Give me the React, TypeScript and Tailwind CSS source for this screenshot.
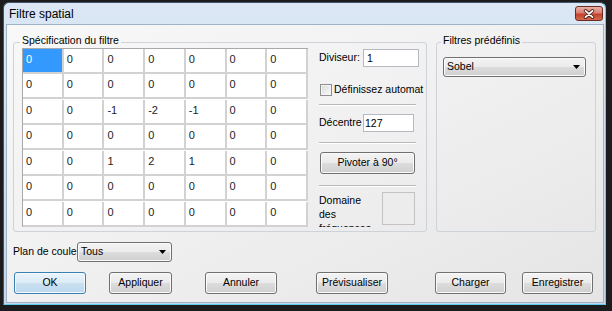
import React from 'react';

// Sobel kernel shown in the "Spécification du filtre" grid
const MATRIX: number[][] = [
  [0, 0, 0, 0, 0, 0, 0],
  [0, 0, 0, 0, 0, 0, 0],
  [0, 0, -1, -2, -1, 0, 0],
  [0, 0, 0, 0, 0, 0, 0],
  [0, 0, 1, 2, 1, 0, 0],
  [0, 0, 0, 0, 0, 0, 0],
  [0, 0, 0, 0, 0, 0, 0],
];

const BTN =
  'flex shrink-0 items-center justify-center h-[22px] rounded-[3px] border border-[#707070] bg-[linear-gradient(#f3f3f3_0%,#ebebeb_50%,#dddddd_50%,#cfcfcf_100%)] shadow-[inset_0_0_0_1px_#fbfbfb] text-[10.5px]';

function Button({ label, className = '' }: { label: string; className?: string }) {
  return <div className={`${BTN} ${className}`}>{label}</div>;
}

function Combo({ value, className = '' }: { value: string; className?: string }) {
  return (
    <div
      className={`flex shrink-0 items-center justify-between h-[20px] rounded-[3px] border border-[#707070] bg-[linear-gradient(#f3f3f3_0%,#ebebeb_50%,#dddddd_50%,#cfcfcf_100%)] shadow-[inset_0_0_0_1px_#fbfbfb] pl-[3px] pr-[5px] text-[10.5px] ${className}`}
    >
      <span>{value}</span>
      <svg width="7" height="4" viewBox="0 0 7 4">
        <path d="M0 0h7L3.5 4z" fill="#000" />
      </svg>
    </div>
  );
}

function Separator() {
  return <div className="w-[97px] h-0 border-t border-b border-t-[#b9b9b9] border-b-white" />;
}

function CloseButton() {
  return (
    <div className="w-[28px] h-[15px] mr-[1px] rounded-[3px] border border-[#6b2a24] bg-[linear-gradient(#eab0a5_0%,#d98071_45%,#c2412c_55%,#d56a4c_100%)] flex items-center justify-center">
      <svg width="12" height="10" viewBox="0 0 12 10">
        <path d="M2.5 1.8 L9.5 8.2 M9.5 1.8 L2.5 8.2" stroke="#3e1b16" strokeWidth="3.4" strokeLinecap="round" />
        <path d="M2.5 1.8 L9.5 8.2 M9.5 1.8 L2.5 8.2" stroke="#ffffff" strokeWidth="1.8" strokeLinecap="round" />
      </svg>
    </div>
  );
}

export default function App() {
  return (
    <div className="w-[612px] h-[311px] bg-[#1c1c1c] pt-[2px] pl-[3px] font-['Liberation_Sans',Arial,sans-serif] text-black">
      <div className="w-[603px] h-[303px] flex flex-col border border-[#46566a] border-r-[#5fcdec] border-b-[#5fcdec] rounded-t-[6px] bg-gradient-to-b from-[#dbe7f4] to-[#c4d7ec] pl-[2px] pr-[1px] pb-[1px]">
        {/* title bar */}
        <div className="h-[21px] flex items-center justify-between pl-[3px]">
          <span className="text-[12px]">Filtre spatial</span>
          <CloseButton />
        </div>

        {/* client area */}
        <div className="flex-1 flex flex-col border border-[#9fb2c8] bg-gradient-to-br from-[#f8f8f8] via-[#f0f0f0] to-[#e5e5e5] pl-[6px] pt-[9px]">
          <div className="flex gap-[9px]">
            {/* filter specification */}
            <fieldset className="w-[414px] h-[198px] border border-[#cdd3d9] rounded-[3px] pl-[8px]">
              <legend className="-ml-[2px] px-[2px] pb-[5px] leading-[12px] text-[10.5px]">Spécification du filtre</legend>
              <div className="flex -mt-[3px]">
                <div className="w-[286px] shrink-0 grid grid-cols-7 border-l border-t border-[#a9a9a9] bg-white">
                  {MATRIX.flatMap((row, r) =>
                    row.map((v, c) => {
                      const sel = r === 0 && c === 0;
                      return (
                        <div
                          key={`${r}-${c}`}
                          className={`h-[25px] border-r-2 border-b-2 border-[#d2d2d2] pl-[3px] pt-[4px] leading-[12px] text-[11px] ${
                            sel ? 'bg-[#3399ff] text-white' : 'text-[#222]'
                          }`}
                        >
                          {v}
                        </div>
                      );
                    })
                  )}
                </div>

                <div className="ml-[11px] w-[107px] shrink-0 overflow-hidden flex flex-col text-[10.5px]">
                  <div className="h-[19px] flex items-center">
                    <span className="w-[44px] shrink-0">Diviseur:</span>
                    <div className="w-[56px] shrink-0 h-[18px] border border-[#b5b9c0] bg-white pl-[3px] leading-[16px]">1</div>
                  </div>
                  <div className="mt-[17px] h-[12px] flex items-center whitespace-nowrap">
                    <div className="ml-[1px] shrink-0 w-[12px] h-[12px] border border-[#8f8f8f] bg-gradient-to-br from-[#d9d9d9] to-[#fbfbfb] shadow-[inset_0_0_0_1px_#f4f4f4]" />
                    <span className="ml-[2px] shrink-0">Définissez automat</span>
                  </div>
                  <div className="mt-[8px]">
                    <Separator />
                  </div>
                  <div className="mt-[8px] h-[18px] flex items-center">
                    <span className="w-[44px] shrink-0">Décentre</span>
                    <div className="w-[51px] shrink-0 h-[18px] border border-[#b5b9c0] bg-white pl-[1px] leading-[16px]">127</div>
                  </div>
                  <div className="mt-[10px]">
                    <Separator />
                  </div>
                  <Button label="Pivoter à 90°" className="mt-[8px] ml-[1px] w-[95px]" />
                  <div className="mt-[11px]">
                    <Separator />
                  </div>
                  <div className="mt-[5px] flex items-start">
                    <div className="mt-[1px] w-[63px] shrink-0 h-[34px] overflow-hidden leading-[14px]">
                      Domaine
                      <br />
                      des
                      <br />
                      fréquences
                    </div>
                    <div className="w-[33px] shrink-0 h-[33px] border border-[#c3c3c3] bg-[#ececec]" />
                  </div>
                </div>
              </div>
            </fieldset>

            {/* predefined filters */}
            <fieldset className="w-[160px] h-[198px] border border-[#cdd3d9] rounded-[3px] pl-[6px]">
              <legend className="-ml-[2px] px-[2px] pb-[5px] leading-[12px] text-[10.5px]">Filtres prédéfinis</legend>
              <Combo value="Sobel" className="mt-[6px] w-[143px]" />
            </fieldset>
          </div>

          <div className="mt-[10px] h-[20px] flex items-center text-[10.5px]">
            <span className="w-[64px] shrink-0 whitespace-nowrap">Plan de coule</span>
            <Combo value="Tous" className="w-[95px]" />
          </div>

          <div className="mt-[10px] flex">
            <div className="ml-[1px] shrink-0 w-[72px] h-[22px] flex items-center justify-center rounded-[3px] border border-[#3c7fb1] bg-[linear-gradient(#eaf4fb_0%,#dcebf6_50%,#cbe1f1_50%,#bdd7ec_100%)] shadow-[inset_0_0_0_1px_#f4fafe] text-[10.5px]">
              OK
            </div>
            <Button label="Appliquer" className="ml-[23px] w-[63px]" />
            <Button label="Annuler" className="ml-[33px] w-[72px]" />
            <Button label="Prévisualiser" className="ml-[39px] w-[72px]" />
            <Button label="Charger" className="ml-[47px] w-[71px]" />
            <Button label="Enregistrer" className="ml-[16px] w-[71px]" />
          </div>
        </div>
      </div>
    </div>
  );
}
